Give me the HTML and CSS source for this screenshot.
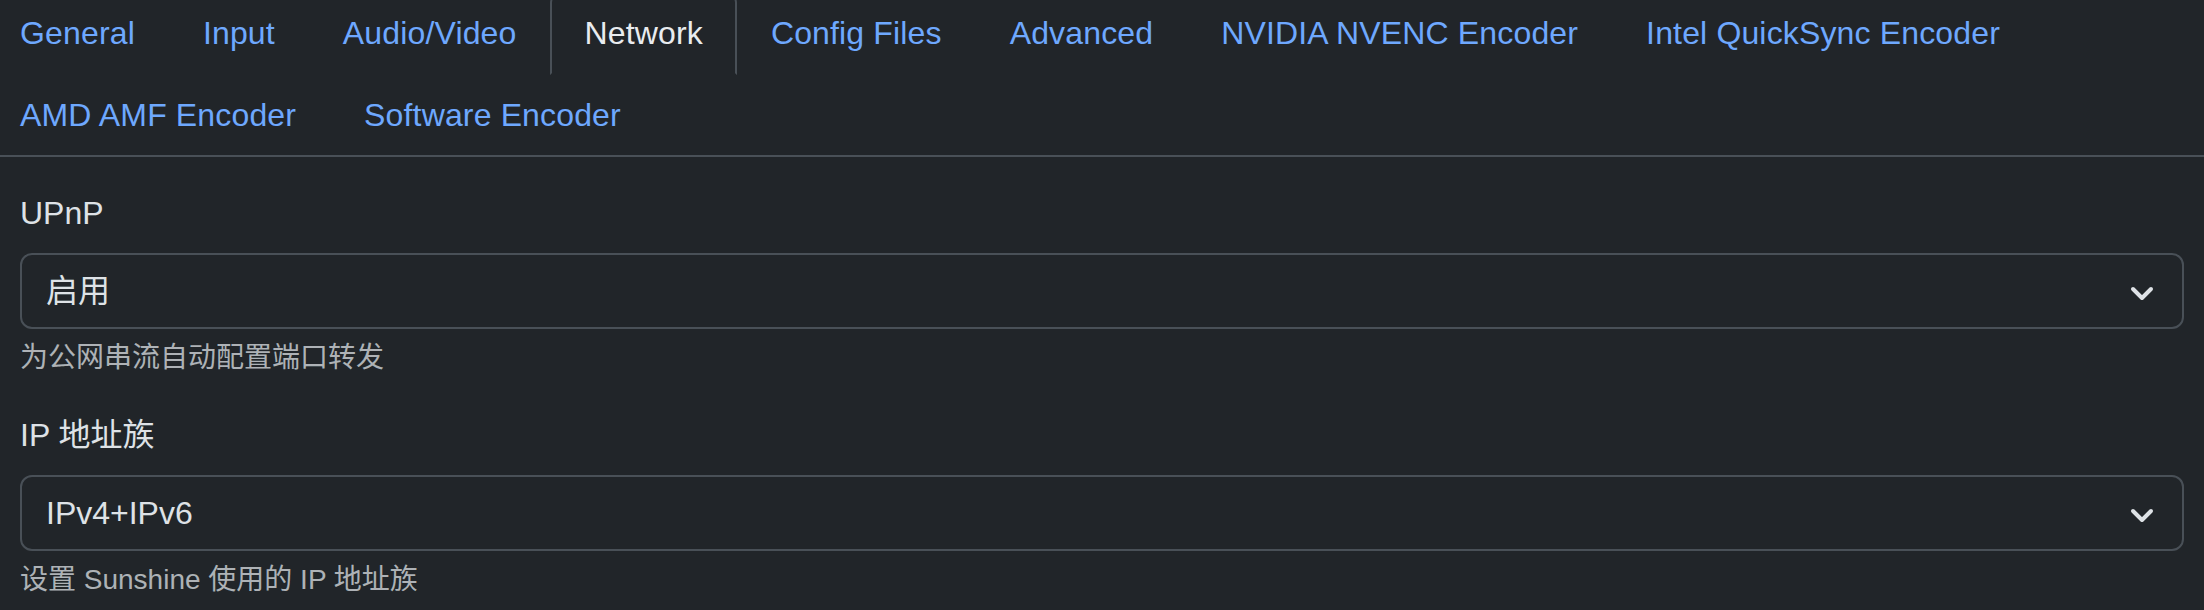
FILE: index.html
```html
<!DOCTYPE html>
<html lang="zh-CN">
<head>
<meta charset="utf-8">
<title>Network</title>
<link rel="stylesheet" href="styles.css">
</head>
<body>
<nav class="tabs">
  <a class="tab">General</a>
  <a class="tab">Input</a>
  <a class="tab">Audio/Video</a>
  <a class="tab active">Network</a>
  <a class="tab">Config Files</a>
  <a class="tab">Advanced</a>
  <a class="tab">NVIDIA NVENC Encoder</a>
  <a class="tab">Intel QuickSync Encoder</a>
  <a class="tab">AMD AMF Encoder</a>
  <a class="tab">Software Encoder</a>
</nav>
<main class="content">
  <div class="field">
    <div class="label">UPnP</div>
    <div class="select">
      <span class="value">启用</span>
      <svg class="chev" viewBox="0 0 32 24" width="32" height="24"><path d="M7 10 L16 19 L25 10" fill="none" stroke="#dee2e6" stroke-width="4" stroke-linecap="round" stroke-linejoin="round"/></svg>
    </div>
    <div class="help">为公网串流自动配置端口转发</div>
  </div>
  <div class="field">
    <div class="label">IP 地址族</div>
    <div class="select">
      <span class="value">IPv4+IPv6</span>
      <svg class="chev" viewBox="0 0 32 24" width="32" height="24"><path d="M7 10 L16 19 L25 10" fill="none" stroke="#dee2e6" stroke-width="4" stroke-linecap="round" stroke-linejoin="round"/></svg>
    </div>
    <div class="help">设置 Sunshine 使用的 IP 地址族</div>
  </div>
</main>
</body>
</html>
```

FILE: styles.css
```css
html, body {
  margin: 0;
  padding: 0;
  background: #212529;
  color: #dee2e6;
  font-family: "Liberation Sans", "Noto Sans CJK SC", sans-serif;
  font-size: 32px;
  line-height: 1.5;
  overflow: hidden;
}

.tabs {
  display: flex;
  flex-wrap: wrap;
  margin: -9px 0 0 -14px;
  border-bottom: 2px solid #495057;
}

.tab {
  display: block;
  padding: 16px 32px;
  border: 2px solid transparent;
  border-top-left-radius: 12px;
  border-top-right-radius: 12px;
  margin-bottom: -2px;
  color: #6ea8fe;
  white-space: nowrap;
  letter-spacing: 0.15px;
}

.tab.active {
  color: #e9ecef;
  background: #212529;
  border-color: #495057 #495057 #212529;
}

.content {
  padding: 32px 20px 0;
}

.field {
  margin-bottom: 32px;
}

.label {
  margin-bottom: 16px;
}

.select {
  display: flex;
  align-items: center;
  justify-content: space-between;
  padding: 12px 24px;
  border: 2px solid #495057;
  border-radius: 12px;
}

.value {
  display: block;
}

.chev {
  display: block;
  flex: none;
}

.help {
  margin-top: 8px;
  font-size: 28px;
  color: rgba(222, 226, 230, 0.75);
}
```
